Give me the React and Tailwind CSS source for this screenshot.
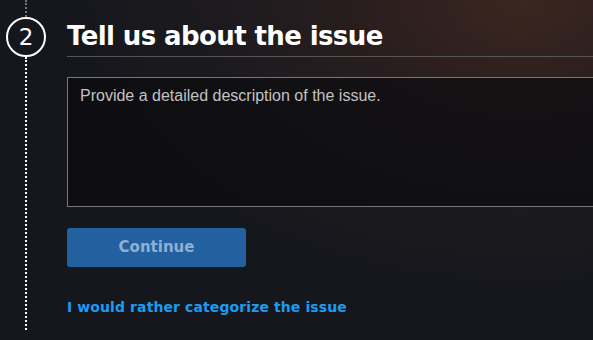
import React from 'react'

const App = () => {
  return (
    <div className="h-[340px] w-full overflow-hidden bg-[#16171d] bg-[radial-gradient(ellipse_75%_85%_at_88%_0%,#3b2620_0%,#2a1e1e_35%,#1c1a1e_70%,#16171d_100%)]">
      <div className="flex h-full">
        {/* Step rail */}
        <div className="flex w-[67px] shrink-0 flex-col items-start pl-[6px]">
          <div className="flex w-10 flex-col items-center">
            <div className="h-[17px] w-0 border-l-2 border-dotted border-gray-400/70" />
            <div className="flex h-10 w-10 items-center justify-center rounded-full border-2 border-white text-[23px] font-normal text-white [font-family:'DejaVu_Sans',sans-serif]">
              2
            </div>
            <div className="h-[273px] w-0 border-l-2 border-dotted border-white" />
          </div>
        </div>

        {/* Content */}
        <div className="flex-1 pt-[17px] [font-family:'DejaVu_Sans',sans-serif]">
          <div className="flex h-[40px] items-center border-b border-[#555] pb-[2px]">
            <h1 className="text-[26px] font-bold leading-none tracking-[-0.6px] text-white">
              Tell us about the issue
            </h1>
          </div>

          <textarea
            className="mt-[20px] block h-[130px] w-[540px] resize-none border border-[#777] bg-[#0c0b0e]/70 px-[12px] py-[6px] text-[16px] text-white outline-none placeholder:text-[#c2c2c2] [font-family:'Liberation_Sans',sans-serif]"
            placeholder="Provide a detailed description of the issue."
          />

          <button className="mt-[21px] flex h-[39px] w-[179px] items-center justify-center rounded-[3px] bg-[#22609f] text-[15px] font-bold text-[#8fb0d4]">
            Continue
          </button>

          <a href="#" className="mt-[30px] block text-[14px] font-bold tracking-[0.1px] text-[#1a9cf2]">
            I would rather categorize the issue
          </a>
        </div>
      </div>
    </div>
  )
}

export default App
